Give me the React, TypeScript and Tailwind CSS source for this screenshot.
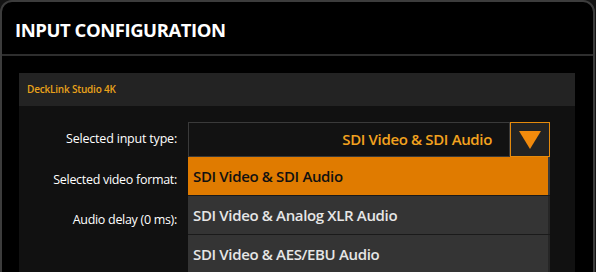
import React from "react";

const font = { fontFamily: '"Open Sans", "Noto Sans", sans-serif' };

export default function App() {
  const items = [
    "SDI Video & SDI Audio",
    "SDI Video & Analog XLR Audio",
    "SDI Video & AES/EBU Audio",
  ];
  return (
    <div className="w-[596px] h-[272px] bg-[#141414] overflow-hidden" style={font}>
      <div className="w-[595px] h-[290px] border-[2px] border-[#3c3c3c] rounded-t-[12px] bg-black flex flex-col">
        <div className="h-[54px] flex items-center pl-[13px] pt-[4px] border-b-[2px] border-[#2e2e2e] shrink-0">
          <span className="text-white font-bold text-[18.5px] tracking-[-0.45px] leading-none">
            INPUT CONFIGURATION
          </span>
        </div>
        <div className="pl-[17px] pt-[17px] flex-1">
          <div className="w-[556px] h-[240px] flex flex-col">
            <div className="h-[33px] bg-[#232323] flex items-center pl-[8px] shrink-0">
              <span className="text-[#e9a21a] text-[10px] font-semibold tracking-[-0.2px]">
                DeckLink Studio 4K
              </span>
            </div>
            <div className="flex-1 bg-[#111111] relative pt-[16px]">
              <div className="flex flex-col">
                <div className="flex items-center h-[35px]">
                  <div className="w-[158px] text-right text-white text-[12.5px] tracking-[-0.2px]">
                    Selected input type:
                  </div>
                  <div className="ml-[11px] flex h-[35px]">
                    <div className="w-[322px] h-[35px] border border-[#3a3a3a] bg-[#121212] flex items-center justify-end pr-[17px]">
                      <span className="text-[#f2a21f] text-[15px] font-semibold tracking-[-0.35px]">
                        SDI Video &amp; SDI Audio
                      </span>
                    </div>
                    <div className="w-[40px] h-[35px] border border-[#e58a0c] bg-[#232323] flex items-center justify-center">
                      <svg width="22" height="18" viewBox="0 0 22 18">
                        <polygon points="0,0 22,0 11,18" fill="#f28a0c" />
                      </svg>
                    </div>
                  </div>
                </div>
                <div className="flex items-center h-[40px] mt-[3px]">
                  <div className="w-[158px] text-right text-white text-[12.5px] tracking-[-0.3px]">
                    Selected video format:
                  </div>
                </div>
                <div className="flex items-center h-[40px]">
                  <div className="w-[158px] text-right text-white text-[12.5px] tracking-[-0.3px]">
                    Audio delay (0 ms):
                  </div>
                </div>
              </div>
              <div className="absolute left-[169px] top-[51px] w-[362px] flex flex-col bg-[#1a1a1a]">
                {items.map((t, i) => (
                  <div
                    key={t}
                    className={
                      i === 0
                        ? "h-[38px] bg-[#e07b00] border-r-[2px] border-[#3a3a3a] flex items-center pl-[5px] mb-[1px]"
                        : "h-[38px] bg-[#343434] border-r-[2px] border-[#262626] flex items-center pl-[5px] mb-[1px]"
                    }
                  >
                    <span
                      className={
                        i === 0
                          ? "text-[#111] text-[15px] font-semibold tracking-[-0.35px]"
                          : "text-[#e6e6e6] text-[15px] font-semibold tracking-[-0.35px]"
                      }
                    >
                      {t}
                    </span>
                  </div>
                ))}
              </div>
            </div>
          </div>
        </div>
      </div>
    </div>
  );
}
